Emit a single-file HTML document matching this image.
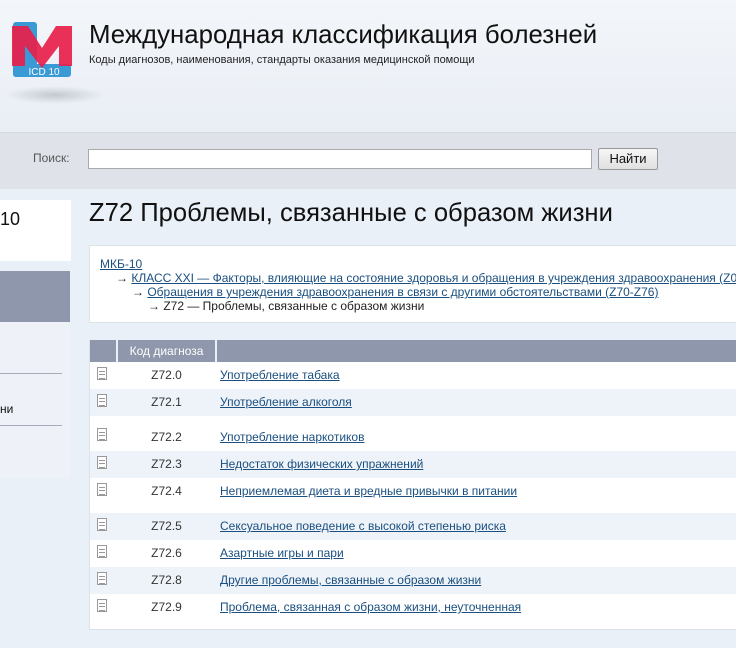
<!DOCTYPE html>
<html><head><meta charset="utf-8"><style>
*{margin:0;padding:0;box-sizing:border-box}
body{width:736px;height:648px;overflow:hidden;background:#eaf0f8;font-family:"Liberation Sans",sans-serif;position:relative;color:#222}
.hdr{position:absolute;left:0;top:0;width:736px;height:132px;background:linear-gradient(#f3f6fa,#e9eef5)}
.shadow{position:absolute;left:5px;top:86px;width:100px;height:18px;border-radius:50%;background:radial-gradient(ellipse,#c4c9d1 0%,rgba(200,205,212,0) 70%)}
.search{position:absolute;left:0;top:132px;width:736px;height:57px;background:#dfe3e9;border-top:1px solid #d3d8df}
a{color:#1a4f7f;text-decoration:underline}
.ab{position:absolute}
.row{position:relative;height:27px;font-size:12px;color:#333;line-height:14px}
.row.t{height:35px}
.row.b{background:#eef3f9}
.row .ic{position:absolute;left:7px;top:5px;width:10px;height:13px;border:1px solid #999;background:#fff}
.row .ic:before{content:"";position:absolute;left:1px;top:3px;width:6px;height:6px;border-top:1px solid #999;border-bottom:1px solid #999}
.row .ic:after{content:"";position:absolute;left:1px;top:6px;width:6px;height:1px;background:#999}
.row .c{position:absolute;left:27px;width:99px;text-align:center;top:6px}
.row .n{position:absolute;left:130px;top:6px}
</style></head><body>
<div class="hdr"></div>
<div class="shadow"></div>
<svg class="ab" style="left:10px;top:20px" width="64" height="58" viewBox="0 0 64 58">
<rect x="3" y="2" width="24" height="55" rx="3" fill="#3a9ad6"/>
<rect x="3" y="44" width="58" height="13" rx="3" fill="#3a9ad6"/>
<path d="M2 6 h16 l14 22 l14 -22 h16 v40 h-13 v-20 l-17 22 l-17 -22 v20 h-13z" fill="#e8204a" opacity="0.92"/>
<text x="34" y="55" font-size="10" fill="#fff" text-anchor="middle" font-family="Liberation Sans">ICD 10</text>
</svg>
<div class="ab" style="left:89px;top:21px;font-size:25.8px;color:#111">Международная классификация болезней</div>
<div class="ab" style="left:89px;top:54px;font-size:11px;color:#222">Коды диагнозов, наименования, стандарты оказания медицинской помощи</div>
<div class="search"></div>
<div class="ab" style="left:33px;top:151px;font-size:12px;color:#555">Поиск:</div>
<div class="ab" style="left:88px;top:149px;width:504px;height:20px;background:#fff;border:1px solid #aaa"></div>
<div class="ab" style="left:598px;top:148px;width:60px;height:22px;background:linear-gradient(#f6f6f6,#e0e0e0);border:1px solid #999;border-radius:2px;font-size:13px;text-align:center;line-height:20px;color:#111">Найти</div>

<div class="ab" style="left:0;top:200px;width:71px;height:61px;background:#fff"></div>
<div class="ab" style="left:0;top:209px;font-size:18px;color:#111">10</div>
<div class="ab" style="left:0;top:271px;width:70px;height:51px;background:#8e97ab"></div>
<div class="ab" style="left:0;top:322px;width:70px;height:156px;background:#eef2f8"></div>
<div class="ab" style="left:0;top:373px;width:62px;height:1px;background:#aab"></div>
<div class="ab" style="left:0;top:402px;font-size:12px;color:#111">ни</div>
<div class="ab" style="left:0;top:425px;width:62px;height:1px;background:#aab"></div>

<div class="ab" style="left:89px;top:199px;font-size:25.6px;color:#111">Z72 Проблемы, связанные с образом жизни</div>
<div class="ab" style="left:89px;top:245px;width:660px;height:78px;background:#fff;border:1px solid #dde2e8;font-size:12px;line-height:14px;padding:11px 0 0 10px;white-space:nowrap">
<a>МКБ-10</a><br>
<span style="padding-left:16px">→ <a>КЛАСС XXI — Факторы, влияющие на состояние здоровья и обращения в учреждения здравоохранения (Z00-Z99)</a></span><br>
<span style="padding-left:32px">→ <a>Обращения в учреждения здравоохранения в связи с другими обстоятельствами (Z70-Z76)</a></span><br>
<span style="padding-left:48px">→ Z72 — Проблемы, связанные с образом жизни</span>
</div>
<div class="ab" style="left:89px;top:340px;width:660px;height:290px;background:#fff;border:1px solid #dde2e8;border-top:none">
<div style="height:22px;background:#8e97ab;position:relative">
<div style="position:absolute;left:26px;top:0;width:2px;height:22px;background:#eaf0f8"></div>
<div style="position:absolute;left:125px;top:0;width:2px;height:22px;background:#eaf0f8"></div>
<div style="position:absolute;left:28px;width:97px;text-align:center;top:4px;font-size:12px;color:#fff">Код диагноза</div>
</div>
<div class="row"><i class="ic"></i><span class="c">Z72.0</span><a class="n">Употребление табака</a></div>
<div class="row b"><i class="ic"></i><span class="c">Z72.1</span><a class="n">Употребление алкоголя</a></div>
<div class="row t"><i class="ic" style="top:12px"></i><span class="c" style="top:14px">Z72.2</span><a class="n" style="top:14px">Употребление наркотиков</a></div>
<div class="row b"><i class="ic"></i><span class="c">Z72.3</span><a class="n">Недостаток физических упражнений</a></div>
<div class="row t"><i class="ic"></i><span class="c">Z72.4</span><a class="n">Неприемлемая диета и вредные привычки в питании</a></div>
<div class="row b"><i class="ic"></i><span class="c">Z72.5</span><a class="n">Сексуальное поведение с высокой степенью риска</a></div>
<div class="row"><i class="ic"></i><span class="c">Z72.6</span><a class="n">Азартные игры и пари</a></div>
<div class="row b"><i class="ic"></i><span class="c">Z72.8</span><a class="n">Другие проблемы, связанные с образом жизни</a></div>
<div class="row"><i class="ic"></i><span class="c">Z72.9</span><a class="n">Проблема, связанная с образом жизни, неуточненная</a></div>
</div>
</body></html>
